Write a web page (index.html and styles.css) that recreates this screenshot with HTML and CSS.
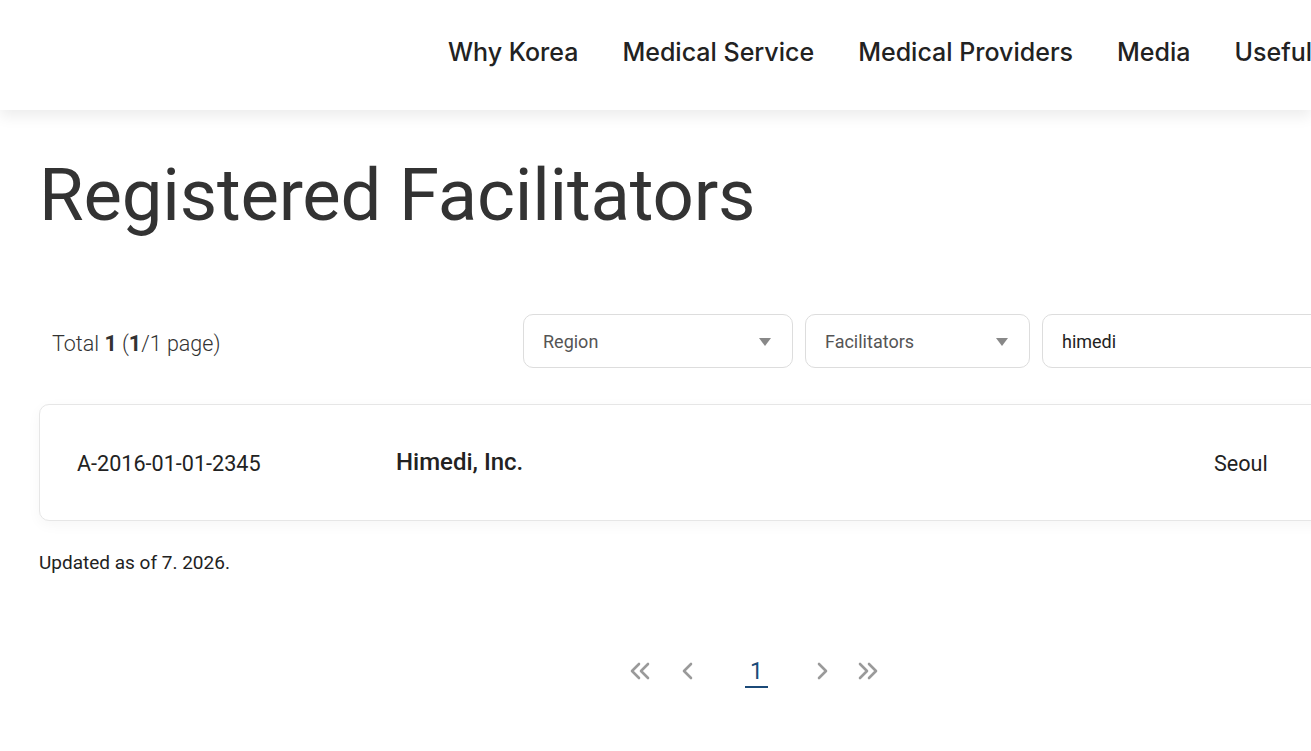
FILE: index.html
```html
<!DOCTYPE html>
<html lang="en">
<head>
    <meta charset="UTF-8">
    <meta name="viewport" content="width=device-width, initial-scale=1.0">
    <title>Registered Facilitators</title>
    <link rel="stylesheet" href="styles.css">
</head>
<body>
    <header class="header">
        <nav class="gnb">
            <a href="#">Why Korea</a>
            <a href="#">Medical Service</a>
            <a href="#">Medical Providers</a>
            <a href="#">Media</a>
            <a href="#">Useful</a>
        </nav>
    </header>

    <main class="container">
        <h1 class="page-title">Registered Facilitators</h1>

        <div class="toolbar">
            <p class="total">Total <b>1</b> (<b>1</b>/1 page)</p>
            <div class="filters">
                <div class="select select-region">
                    <span>Region</span>
                    <i class="caret"></i>
                </div>
                <div class="select select-facilitator">
                    <span>Facilitators</span>
                    <i class="caret"></i>
                </div>
                <input type="text" class="search" value="himedi">
            </div>
        </div>

        <ul class="list">
            <li class="list-item">
                <span class="col-no">A-2016-01-01-2345</span>
                <strong class="col-name">Himedi, Inc.</strong>
                <span class="col-region">Seoul</span>
            </li>
        </ul>

        <p class="updated">Updated as of 7. 2026.</p>

        <div class="paging">
            <a href="#" class="pg-btn">
                <svg width="24" height="24" viewBox="0 0 24 24"><path d="M11 5 4 12l7 7M20 5l-7 7 7 7"/></svg>
            </a>
            <a href="#" class="pg-btn pg-prev">
                <svg width="14" height="24" viewBox="0 0 14 24"><path d="M11 5 4 12l7 7"/></svg>
            </a>
            <a href="#" class="pg-num">1</a>
            <a href="#" class="pg-btn pg-next">
                <svg width="14" height="24" viewBox="0 0 14 24"><path d="M3 5l7 7-7 7"/></svg>
            </a>
            <a href="#" class="pg-btn">
                <svg width="24" height="24" viewBox="0 0 24 24"><path d="M4 5l7 7-7 7M13 5l7 7-7 7"/></svg>
            </a>
        </div>
    </main>
</body>
</html>
```

FILE: styles.css
```css
html, body {
    margin: 0;
    padding: 0;
    overflow-x: hidden;
}
body {
    font-family: Roboto, "Liberation Sans", sans-serif;
    color: #333;
    background-color: #fff;
}
a {
    text-decoration: none;
    color: inherit;
}

/* header */
.header {
    height: 110px;
    background-color: #fff;
    box-shadow: 0 6px 14px rgba(0, 0, 0, 0.08);
    position: relative;
    z-index: 2;
}
.gnb {
    display: flex;
    align-items: center;
    gap: 44px;
    height: 104px;
    padding-left: 448px;
    white-space: nowrap;
}
.gnb a {
    font-family: Inter, Roboto, sans-serif;
    font-size: 25px;
    font-weight: 500;
    color: #222;
}

/* content */
.container {
    width: 1432px;
    margin-left: 39px;
}
.page-title {
    margin: 44px 0 0;
    font-size: 72.5px;
    line-height: 84px;
    font-weight: 400;
    color: #333;
    letter-spacing: -0.2px;
}
.toolbar {
    display: flex;
    align-items: center;
    justify-content: space-between;
    margin-top: 76px;
}
.total {
    margin: 5px 0 0 13px;
    font-size: 21.5px;
    font-weight: 300;
    color: #333;
}
.total b {
    font-weight: 700;
}
.filters {
    display: flex;
    gap: 12px;
}
.select,
.search {
    box-sizing: border-box;
    height: 54px;
    border: 1px solid #ddd;
    border-radius: 10px;
    background-color: #fff;
    font-family: Roboto, sans-serif;
    font-size: 18px;
}
.select {
    display: flex;
    align-items: center;
    justify-content: space-between;
    padding: 1px 21px 0 19px;
    color: #555;
}
.select-region {
    width: 270px;
}
.select-facilitator {
    width: 225px;
}
.caret {
    width: 0;
    height: 0;
    border-left: 6px solid transparent;
    border-right: 6px solid transparent;
    border-top: 8px solid #888;
}
.search {
    width: 429px;
    padding: 0 18px 0 19px;
    color: #222;
    outline: none;
}

/* list */
.list {
    list-style: none;
    margin: 36px 0 0;
    padding: 0;
}
.list-item {
    box-sizing: border-box;
    display: flex;
    align-items: center;
    height: 117px;
    padding-left: 37px;
    border: 1px solid #e6e6e6;
    border-radius: 10px;
    background-color: #fff;
    box-shadow: 0 4px 14px rgba(0, 0, 0, 0.04);
}
.col-no {
    width: 319px;
    font-size: 21.6px;
    color: #222;
    margin-top: 2px;
}
.col-name {
    width: 818px;
    font-size: 24px;
    font-weight: 500;
    color: #222;
    margin-top: -2px;
}
.col-region {
    font-size: 21.6px;
    color: #222;
    margin-top: 2px;
}
.updated {
    margin: 30px 0 0;
    font-size: 19px;
    line-height: 24px;
    color: #222;
}

/* paging */
.paging {
    display: flex;
    align-items: center;
    margin: 81px 0 40px 589px;
    height: 30px;
}
.pg-btn {
    display: flex;
    align-items: center;
    color: #999;
}
.pg-btn svg path {
    fill: none;
    stroke: #9a9a9a;
    stroke-width: 2.6;
    stroke-linecap: round;
    stroke-linejoin: round;
}
.pg-prev {
    margin-left: 28px;
}
.pg-num {
    margin: 4px 48px 0 51px;
    font-size: 23px;
    line-height: 28px;
    color: #1b4a78;
    padding: 0 5px;
    border-bottom: 2px solid #1b4a78;
}
.pg-next + .pg-btn {
    margin-left: 26px;
}
```
